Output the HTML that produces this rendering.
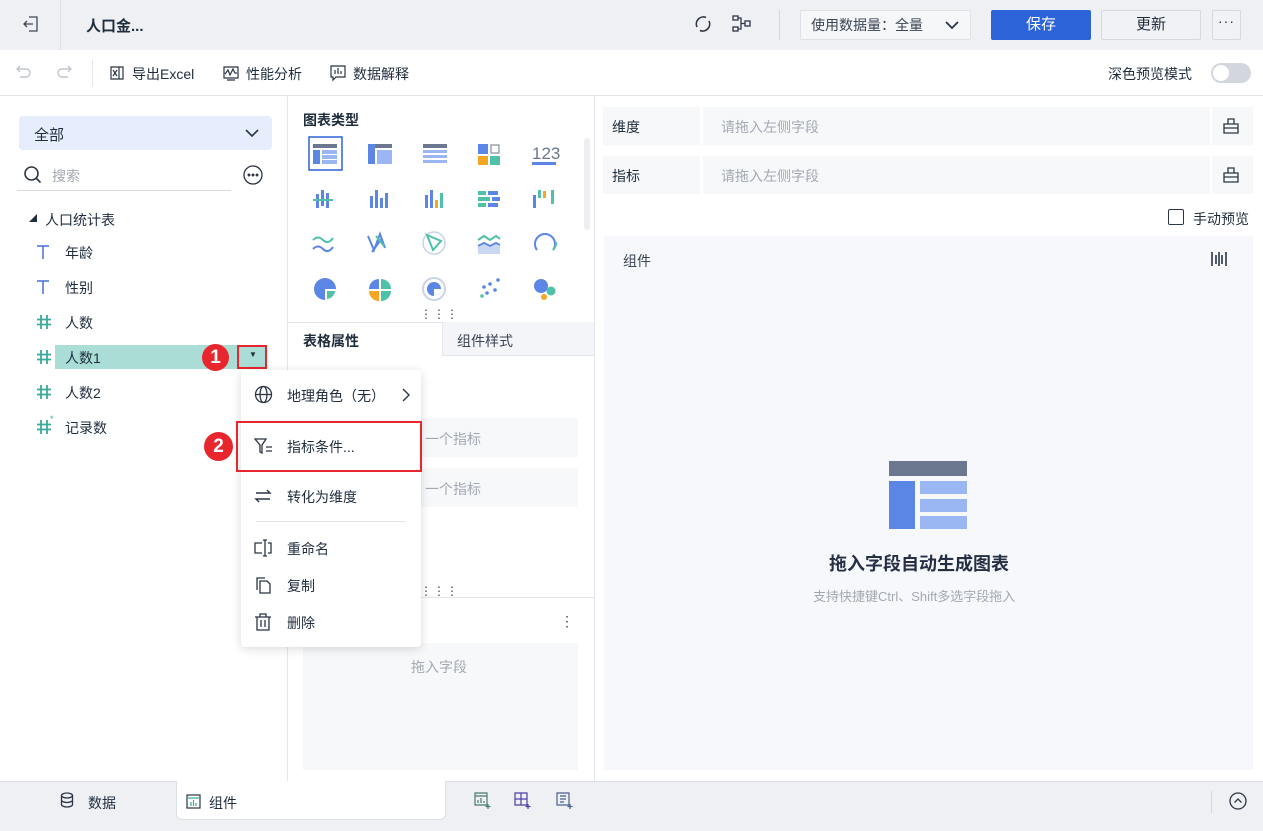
<!DOCTYPE html>
<html><head><meta charset="utf-8"><style>
*{box-sizing:border-box;margin:0;padding:0}
body{width:1263px;height:831px;overflow:hidden;font-family:"Liberation Sans","Noto Sans CJK SC",sans-serif;font-size:14px;color:#1f2d3d;background:#fff;position:relative}
.a{position:absolute}
.top{left:0;top:0;width:1263px;height:50px;background:#eef0f4}
.tb{left:0;top:50px;width:1263px;height:46px;background:#fff;border-bottom:1px solid #e3e6eb}
.btn{position:absolute;height:30px;border-radius:2px;text-align:center;line-height:28px;font-size:14px}
.icn{position:absolute}
.tx{position:absolute;white-space:nowrap}
.gray{color:#a3a9b3}
.mi{position:absolute;left:0;width:180px;height:36px}
.mi span{position:absolute;left:46px;top:9px;font-size:14px}
</style></head><body>
<div class="a top"></div>
<div class="a" style="left:60px;top:0;width:1px;height:50px;background:#dcdfe5"></div>
<svg class="icn" style="left:22px;top:15px" width="18" height="18" viewBox="0 0 18 18" fill="none" stroke="#3b4657" stroke-width="1.3"><path d="M7 2h8v14H7M11 9H2M5 6L2 9l3 3"/></svg>
<div class="tx" style="left:86px;top:15px;font-size:15px;font-weight:bold">人口金...</div>
<svg class="icn" style="left:693px;top:14px" width="20" height="20" viewBox="0 0 20 20" fill="none" stroke="#2b3544" stroke-width="1.6"><path d="M4 13A7 7 0 0 1 13 3.5M16 7A7 7 0 0 1 7 16.5"/></svg>
<svg class="icn" style="left:732px;top:15px" width="20" height="18" viewBox="0 0 20 18" fill="none" stroke="#2b3544" stroke-width="1.3"><rect x="1" y="1" width="5" height="4"/><rect x="1" y="12" width="5" height="4"/><rect x="13" y="6" width="5" height="5"/><path d="M6 3h3v11H6M9 8.5h4"/></svg>
<div class="a" style="left:779px;top:10px;width:1px;height:30px;background:#d4d8de"></div>
<div class="btn" style="left:800px;top:10px;width:171px;background:#f6f7f9;border:1px solid #dfe2e7;text-align:left;padding-left:10px;color:#3a4453">使用数据量：全量<svg style="position:absolute;left:143px;top:8px" width="16" height="12" viewBox="0 0 16 12" fill="none" stroke="#2b3544" stroke-width="1.8"><path d="M2 3l6 6 6-6"/></svg></div>
<div class="btn" style="left:991px;top:10px;width:100px;background:#2d63d8;color:#fff;font-size:15px;line-height:30px">保存</div>
<div class="btn" style="left:1101px;top:10px;width:100px;background:#f1f2f5;border:1px solid #d6d9df;font-size:15px">更新</div>
<div class="btn" style="left:1212px;top:10px;width:29px;background:#f1f2f5;border:1px solid #d6d9df;line-height:20px;letter-spacing:1px">···</div>

<div class="a tb"></div>
<svg class="icn" style="left:15px;top:64px" width="18" height="16" viewBox="0 0 18 16" fill="none" stroke="#c0c5cd" stroke-width="1.4"><path d="M5 2L2 5l3 3M2 5h9a4 4 0 0 1 0 8H5"/></svg>
<svg class="icn" style="left:55px;top:64px" width="18" height="16" viewBox="0 0 18 16" fill="none" stroke="#c0c5cd" stroke-width="1.4"><path d="M13 2l3 3-3 3M16 5H7a4 4 0 0 0 0 8h6"/></svg>
<div class="a" style="left:92px;top:60px;width:1px;height:26px;background:#e3e6eb"></div>
<svg class="icn" style="left:109px;top:65px" width="16" height="16" viewBox="0 0 16 16" fill="none" stroke="#2b3544" stroke-width="1.2"><path d="M2 2h12v12H2z M10 2v12M4 5l4 6M8 5l-4 6"/></svg>
<div class="tx" style="left:132px;top:64px">导出Excel</div>
<svg class="icn" style="left:223px;top:65px" width="16" height="16" viewBox="0 0 16 16" fill="none" stroke="#2b3544" stroke-width="1.2"><path d="M1 2h14v11H1zM2 9l3-4 2 5 3-6 2 4h2M4 15h8"/></svg>
<div class="tx" style="left:246px;top:64px">性能分析</div>
<svg class="icn" style="left:330px;top:65px" width="16" height="17" viewBox="0 0 16 17" fill="none" stroke="#2b3544" stroke-width="1.2"><path d="M1 1h14v11H6l-3 3v-3H1zM5 5v4M8 3v6M11 6v3"/></svg>
<div class="tx" style="left:353px;top:64px">数据解释</div>
<div class="tx" style="left:1108px;top:64px">深色预览模式</div>
<div class="a" style="left:1211px;top:63px;width:40px;height:20px;border-radius:10px;background:#d3d6dc"><div class="a" style="left:2px;top:2px;width:16px;height:16px;border-radius:8px;background:#fff"></div></div>

<!-- left panel -->
<div class="a" style="left:287px;top:96px;width:1px;height:685px;background:#e3e6eb"></div>
<div class="a" style="left:19px;top:116px;width:253px;height:34px;background:#e6edfc;border-radius:4px"></div>
<div class="tx" style="left:34px;top:124px;font-size:15px">全部</div>
<svg class="icn" style="left:244px;top:127px" width="16" height="12" viewBox="0 0 16 12" fill="none" stroke="#2b3544" stroke-width="1.6"><path d="M2 3l6 6 6-6"/></svg>
<svg class="icn" style="left:23px;top:165px" width="20" height="20" viewBox="0 0 20 20" fill="none" stroke="#2b3544" stroke-width="1.6"><circle cx="8.5" cy="8.5" r="6.5"/><path d="M13.5 13.5l4 4"/></svg>
<div class="tx gray" style="left:52px;top:166px">搜索</div>
<div class="a" style="left:17px;top:190px;width:214px;height:1px;background:#d9dce1"></div>
<svg class="icn" style="left:242px;top:164px" width="22" height="22" viewBox="0 0 22 22" fill="none" stroke="#2b3544" stroke-width="1.3"><circle cx="11" cy="11" r="9"/><circle cx="7" cy="11" r=".8" fill="#2b3544"/><circle cx="11" cy="11" r=".8" fill="#2b3544"/><circle cx="15" cy="11" r=".8" fill="#2b3544"/></svg>
<div class="tx" style="left:29px;top:213px;font-size:8px">◢</div>
<div class="tx" style="left:45px;top:210px">人口统计表</div>
<svg class="icn" style="left:36px;top:245px" width="14" height="14" viewBox="0 0 14 14" stroke="#4a6fd6" stroke-width="1.5"><path d="M1 1h12M7 1v13"/></svg><div class="tx" style="left:65px;top:243px">年龄</div>
<svg class="icn" style="left:36px;top:280px" width="14" height="14" viewBox="0 0 14 14" stroke="#4a6fd6" stroke-width="1.5"><path d="M1 1h12M7 1v13"/></svg><div class="tx" style="left:65px;top:278px">性别</div>
<svg class="icn" style="left:37px;top:315px" width="14" height="14" viewBox="0 0 14 14" stroke="#3aaa9c" stroke-width="1.8"><path d="M4 0v14M10 0v14M0 4.5h14M0 9.5h14"/></svg><div class="tx" style="left:65px;top:313px">人数</div>
<div class="a" style="left:55px;top:345px;width:210px;height:24px;background:#a9ddd6"></div>
<svg class="icn" style="left:37px;top:350px" width="14" height="14" viewBox="0 0 14 14" stroke="#3aaa9c" stroke-width="1.8"><path d="M4 0v14M10 0v14M0 4.5h14M0 9.5h14"/></svg><div class="tx" style="left:65px;top:348px">人数1</div>
<div class="a" style="left:237px;top:345px;width:30px;height:24px;border:2px solid #e8262d"></div>
<div class="tx" style="left:249px;top:350px;font-size:8px">▼</div>
<div class="a" style="left:202px;top:344px;width:27px;height:27px;border-radius:50%;background:#e8262d;color:#fff;text-align:center;line-height:27px;font-size:19px;font-weight:bold">1</div>
<svg class="icn" style="left:37px;top:385px" width="14" height="14" viewBox="0 0 14 14" stroke="#3aaa9c" stroke-width="1.8"><path d="M4 0v14M10 0v14M0 4.5h14M0 9.5h14"/></svg><div class="tx" style="left:65px;top:383px">人数2</div>
<svg class="icn" style="left:37px;top:420px" width="14" height="14" viewBox="0 0 14 14" stroke="#3aaa9c" stroke-width="1.8"><path d="M4 0v14M10 0v14M0 4.5h14M0 9.5h14"/></svg><div class="tx" style="left:50px;top:414px;color:#3aaa9c;font-size:9px">*</div><div class="tx" style="left:65px;top:418px">记录数</div>

<!-- middle panel -->
<div class="a" style="left:594px;top:96px;width:1px;height:685px;background:#e3e6eb"></div>
<div class="tx" style="left:303px;top:110px;font-weight:bold">图表类型</div>
<div class="a" style="left:584px;top:138px;width:6px;height:92px;border-radius:3px;background:#eceef1"></div>
<svg class="a" style="left:303px;top:134px" width="270" height="170" viewBox="303 134 270 170">
<rect x="309" y="137" width="33" height="33" fill="none" stroke="#2d63d8" stroke-width="1.5"/>
<rect x="313" y="144" width="24" height="4" fill="#6b7890"/><rect x="313" y="150" width="7" height="14" fill="#5b86e5"/><rect x="322" y="150" width="15" height="4" fill="#9ab7f3"/><rect x="322" y="155" width="15" height="4" fill="#9ab7f3"/><rect x="322" y="160" width="15" height="4" fill="#9ab7f3"/>
<rect x="368" y="144" width="24" height="4" fill="#6b7890"/><rect x="368" y="144" width="7" height="20" fill="#5b86e5"/><rect x="377" y="150" width="15" height="14" fill="#9ab7f3"/>
<rect x="423" y="144" width="24" height="4" fill="#6b7890"/><rect x="423" y="150" width="24" height="3" fill="#9ab7f3"/><rect x="423" y="155" width="24" height="3" fill="#9ab7f3"/><rect x="423" y="160" width="24" height="3" fill="#9ab7f3"/>
<rect x="478" y="144" width="10" height="10" fill="#5b86e5"/><rect x="491" y="145" width="8" height="8" fill="none" stroke="#6b7890"/><rect x="478" y="156" width="10" height="9" fill="#f5a623"/><rect x="490" y="156" width="10" height="9" fill="#4fc1a9"/>
<text x="532" y="159" font-size="17" fill="#6b7890" font-family="Liberation Sans">123</text><rect x="532" y="162" width="24" height="3" fill="#5b86e5"/>
<g fill="#5b86e5"><rect x="316" y="194" width="3" height="5"/><rect x="321" y="190" width="3" height="9"/><rect x="326" y="193" width="3" height="6"/><rect x="316" y="201" width="3" height="7"/><rect x="321" y="201" width="3" height="5"/><rect x="326" y="201" width="3" height="7"/><rect x="313" y="199" width="20" height="2" fill="#4fc1a9"/>
<rect x="370" y="196" width="3" height="12"/><rect x="375" y="190" width="3" height="18"/><rect x="380" y="198" width="3" height="10"/><rect x="385" y="193" width="3" height="15"/>
<rect x="425" y="195" width="3" height="13"/><rect x="430" y="190" width="3" height="18"/><rect x="440" y="193" width="3" height="15" fill="#4fc1a9"/><rect x="435" y="200" width="3" height="8" fill="#f5a623"/>
<rect x="478" y="191" width="8" height="4" fill="#4fc1a9"/><rect x="488" y="191" width="10" height="4"/><rect x="478" y="197" width="12" height="4" fill="#4fc1a9"/><rect x="492" y="197" width="8" height="4"/><rect x="478" y="203" width="8" height="4" fill="#4fc1a9"/><rect x="488" y="203" width="10" height="4"/>
<rect x="533" y="195" width="3" height="13"/><rect x="538" y="190" width="3" height="8" fill="#4fc1a9"/><rect x="543" y="191" width="3" height="7" fill="#f5a623"/><rect x="551" y="190" width="3" height="14" fill="#4fc1a9"/></g>
<g fill="none" stroke-width="2"><path d="M313 240q5-5 10 0t10-2" stroke="#4fc1a9"/><path d="M313 249q5-5 10 0t10-2" stroke="#5b86e5"/>
<path d="M368 236l6 14 6-16 5 14M372 252l10-14" stroke="#5b86e5"/><path d="M376 236l8 10" stroke="#4fc1a9"/>
<circle cx="434" cy="243" r="11" stroke="#c9d3e8" stroke-width="1.5"/><path d="M427 235l14 6-8 9z" stroke="#4fc1a9"/>
<path d="M478 240l6-4 6 4 6-4 4 3" stroke="#4fc1a9"/><path d="M478 246l6-3 6 3 6-3 4 2" stroke="#5b86e5"/>
<path d="M537 250a10 10 0 1 1 16 0" stroke="#5b86e5"/><path d="M553 250a10 10 0 0 0 3-8" stroke="#4fc1a9"/></g>
<path d="M478 247l6-3 6 3 6-3 4 2v8h-22z" fill="#c9d7f5"/>
<circle cx="325" cy="289" r="11" fill="#5b86e5"/><path d="M325 289h11a11 11 0 0 1-11 11z" fill="#fff"/><path d="M327 291h8a9 9 0 0 1-8 8z" fill="#4fc1a9"/>
<path d="M379 279a10 10 0 0 0-10 10h10z" fill="#5b86e5"/><path d="M381 279a10 10 0 0 1 10 10h-10z" fill="#4fc1a9"/><path d="M369 291a10 10 0 0 0 10 10v-10z" fill="#f5a623"/><path d="M381 291h10a10 10 0 0 1-10 10z" fill="#4fc1a9"/>
<circle cx="434" cy="289" r="11" fill="none" stroke="#c9d3e8" stroke-width="2"/><circle cx="434" cy="289" r="7" fill="#5b86e5"/><path d="M434 289h7a7 7 0 0 1-7 7z" fill="#fff"/>
<g fill="#5b86e5"><circle cx="482" cy="296" r="1.8" fill="#4fc1a9"/><circle cx="487" cy="293" r="1.8"/><circle cx="484" cy="287" r="1.8"/><circle cx="490" cy="284" r="1.8"/><circle cx="495" cy="290" r="1.8"/><circle cx="498" cy="280" r="1.8"/></g>
<circle cx="541" cy="286" r="7" fill="#5b86e5"/><circle cx="551" cy="291" r="4.5" fill="#4fc1a9"/><circle cx="544" cy="297" r="3" fill="#f5a623"/>
</svg>
<div class="tx" style="left:420px;top:307px;font-size:12px;letter-spacing:1px;color:#444">⋮⋮⋮</div>
<div class="a" style="left:288px;top:322px;width:306px;height:1px;background:#e3e6eb"></div>
<div class="a" style="left:442px;top:322px;width:152px;height:34px;background:#f4f5f8;border-left:1px solid #e3e6eb;border-bottom:1px solid #e3e6eb"></div>
<div class="tx" style="left:303px;top:331px;font-weight:bold">表格属性</div>
<div class="tx" style="left:457px;top:331px;color:#3a4453">组件样式</div>
<div class="a" style="left:303px;top:418px;width:275px;height:39px;background:#f7f8fa"></div>
<div class="tx gray" style="left:425px;top:429px">一个指标</div>
<div class="a" style="left:303px;top:468px;width:275px;height:39px;background:#f7f8fa"></div>
<div class="tx gray" style="left:425px;top:479px">一个指标</div>
<div class="tx" style="left:420px;top:584px;font-size:12px;letter-spacing:1px;color:#444">⋮⋮⋮</div>
<div class="a" style="left:288px;top:597px;width:306px;height:1px;background:#e3e6eb"></div>
<div class="tx" style="left:560px;top:613px;font-size:14px;color:#444">⋮</div>
<div class="a" style="left:303px;top:643px;width:275px;height:127px;background:#f7f8fa"></div>
<div class="tx gray" style="left:411px;top:657px">拖入字段</div>

<!-- right -->
<div class="a" style="left:603px;top:107px;width:97px;height:38px;background:#f7f8fa"></div>
<div class="a" style="left:703px;top:107px;width:507px;height:38px;background:#f7f8fa"></div>
<div class="a" style="left:1212px;top:107px;width:41px;height:38px;background:#f7f8fa"></div>
<div class="tx" style="left:612px;top:117px">维度</div><div class="tx gray" style="left:721px;top:117px">请拖入左侧字段</div>
<div class="a" style="left:603px;top:156px;width:97px;height:38px;background:#f7f8fa"></div>
<div class="a" style="left:703px;top:156px;width:507px;height:38px;background:#f7f8fa"></div>
<div class="a" style="left:1212px;top:156px;width:41px;height:38px;background:#f7f8fa"></div>
<div class="tx" style="left:612px;top:166px">指标</div><div class="tx gray" style="left:721px;top:166px">请拖入左侧字段</div>
<svg class="icn" style="left:1222px;top:117px" width="18" height="18" viewBox="0 0 18 18" fill="none" stroke="#2b3544" stroke-width="1.3"><path d="M2 7h14v9H2zM6 7V2h6v5M2 11h14"/></svg>
<svg class="icn" style="left:1222px;top:166px" width="18" height="18" viewBox="0 0 18 18" fill="none" stroke="#2b3544" stroke-width="1.3"><path d="M2 7h14v9H2zM6 7V2h6v5M2 11h14"/></svg>
<div class="a" style="left:1168px;top:209px;width:16px;height:16px;border:1.3px solid #2b3544;border-radius:2px"></div>
<div class="tx" style="left:1193px;top:209px">手动预览</div>
<div class="a" style="left:604px;top:236px;width:649px;height:534px;background:#f7f8fb"></div>
<div class="tx" style="left:623px;top:251px;color:#3a4453">组件</div>
<svg class="icn" style="left:1210px;top:250px" width="18" height="18" viewBox="0 0 18 18" stroke="#2b3544" stroke-width="1.6"><path d="M2 2v14M6 5v9M9 2v14M12 5v9M16 2v14"/></svg>
<div class="a" style="left:889px;top:461px;width:78px;height:15px;background:#6b7890"></div>
<div class="a" style="left:889px;top:481px;width:26px;height:48px;background:#5b86e5"></div>
<div class="a" style="left:920px;top:481px;width:47px;height:13px;background:#9ab7f3"></div>
<div class="a" style="left:920px;top:499px;width:47px;height:13px;background:#9ab7f3"></div>
<div class="a" style="left:920px;top:516px;width:47px;height:13px;background:#9ab7f3"></div>
<div class="tx" style="left:829px;top:550px;font-size:18px;font-weight:bold;color:#253045">拖入字段自动生成图表</div>
<div class="tx gray" style="left:813px;top:586px;font-size:13px">支持快捷键Ctrl、Shift多选字段拖入</div>

<!-- menu -->
<div class="a" style="left:241px;top:370px;width:180px;height:277px;background:#fff;border-radius:4px;box-shadow:0 2px 10px rgba(0,0,0,.15)"></div>
<div class="a" style="left:241px;top:370px;width:180px;height:277px">
<div class="mi" style="top:7px"><svg class="icn" style="left:13px;top:8px" width="19" height="19" viewBox="0 0 19 19" fill="none" stroke="#2b3544" stroke-width="1.3"><circle cx="9.5" cy="9.5" r="8"/><ellipse cx="9.5" cy="9.5" rx="3.5" ry="8"/><path d="M1.5 9.5h16"/></svg><span>地理角色（无）</span><svg class="icn" style="left:160px;top:10px" width="10" height="16" viewBox="0 0 10 16" fill="none" stroke="#2b3544" stroke-width="1.4"><path d="M2 2l6 6-6 6"/></svg></div>
<div class="mi" style="top:58px"><svg class="icn" style="left:13px;top:9px" width="20" height="18" viewBox="0 0 20 18" fill="none" stroke="#2b3544" stroke-width="1.3"><path d="M1 2h11L8 8v8L6 15V8zM12 10h6M12 14h6"/></svg><span>指标条件...</span></div>
<div class="mi" style="top:108px"><svg class="icn" style="left:13px;top:9px" width="18" height="18" viewBox="0 0 18 18" fill="none" stroke="#2b3544" stroke-width="1.4"><path d="M2 6h14l-3-3M16 12H2l3 3"/></svg><span>转化为维度</span></div>
<div class="a" style="left:15px;top:151px;width:150px;height:1px;background:#e3e6eb"></div>
<div class="mi" style="top:160px"><svg class="icn" style="left:13px;top:9px" width="20" height="18" viewBox="0 0 20 18" fill="none" stroke="#2b3544" stroke-width="1.3"><path d="M8 4H1v10h7M14 4h3v10h-3M11 1v16M9 1h4M9 17h4"/></svg><span>重命名</span></div>
<div class="mi" style="top:197px"><svg class="icn" style="left:13px;top:9px" width="18" height="18" viewBox="0 0 18 18" fill="none" stroke="#2b3544" stroke-width="1.3"><path d="M3 14V2h8M6 5h7l3 3v9H6z"/></svg><span>复制</span></div>
<div class="mi" style="top:234px"><svg class="icn" style="left:13px;top:9px" width="18" height="18" viewBox="0 0 18 18" fill="none" stroke="#2b3544" stroke-width="1.3"><path d="M1 4h16M6 4V1h6v3M3 4v13h12V4M7 7v7M11 7v7"/></svg><span>删除</span></div>
</div>
<div class="a" style="left:236px;top:421px;width:186px;height:51px;border:2px solid #e8262d"></div>
<div class="a" style="left:204px;top:432px;width:29px;height:29px;border-radius:50%;background:#e8262d;color:#fff;text-align:center;line-height:29px;font-size:19px;font-weight:bold">2</div>

<!-- bottom -->
<div class="a" style="left:0;top:781px;width:1263px;height:50px;background:#eef0f4;border-top:1px solid #dcdfe5"></div>
<div class="a" style="left:176px;top:781px;width:270px;height:39px;background:#fff;border-radius:0 0 6px 6px;border:1px solid #dcdfe5;border-top:none"></div>
<svg class="icn" style="left:60px;top:792px" width="14" height="16" viewBox="0 0 14 16" fill="none" stroke="#2b3544" stroke-width="1.3"><ellipse cx="7" cy="3.5" rx="5.5" ry="2.5"/><path d="M1.5 3.5v9c0 1.4 2.5 2.5 5.5 2.5s5.5-1.1 5.5-2.5v-9M1.5 8c0 1.4 2.5 2.5 5.5 2.5s5.5-1.1 5.5-2.5"/></svg>
<div class="tx" style="left:88px;top:793px">数据</div>
<svg class="icn" style="left:186px;top:794px" width="15" height="15" viewBox="0 0 15 15" fill="none" stroke="#2b3544" stroke-width="1.2"><rect x="1" y="1" width="13" height="13"/><path d="M1 4h13M5 12V8M7.5 12V6M10 12V9" stroke="#3aaa9c"/></svg>
<div class="tx" style="left:209px;top:793px">组件</div>
<svg class="icn" style="left:474px;top:792px" width="18" height="18" viewBox="0 0 18 18" fill="none" stroke="#4a7a6e" stroke-width="1.2"><path d="M1 1h12v12H1zM1 4h12M4 11V8M7 11V6M10 11V9M14 12v5M11.5 14.5h5"/></svg>
<svg class="icn" style="left:514px;top:792px" width="18" height="18" viewBox="0 0 18 18" fill="none" stroke="#4b3fa8" stroke-width="1.2"><path d="M1 1h12v12H1zM7 1v12M1 7h12M14 12v5M11.5 14.5h5"/></svg>
<svg class="icn" style="left:556px;top:792px" width="18" height="18" viewBox="0 0 18 18" fill="none" stroke="#4a5f8e" stroke-width="1.2"><path d="M1 1h12v12H1zM4 4h6M4 7h6M4 10h4M14 12v5M11.5 14.5h5"/></svg>
<div class="a" style="left:1211px;top:791px;width:1px;height:22px;background:#d4d8de"></div>
<svg class="icn" style="left:1229px;top:792px" width="18" height="18" viewBox="0 0 18 18" fill="none" stroke="#2b3544" stroke-width="1.3"><circle cx="9" cy="9" r="8"/><path d="M5.5 10.5L9 7l3.5 3.5"/></svg>
</body></html>
